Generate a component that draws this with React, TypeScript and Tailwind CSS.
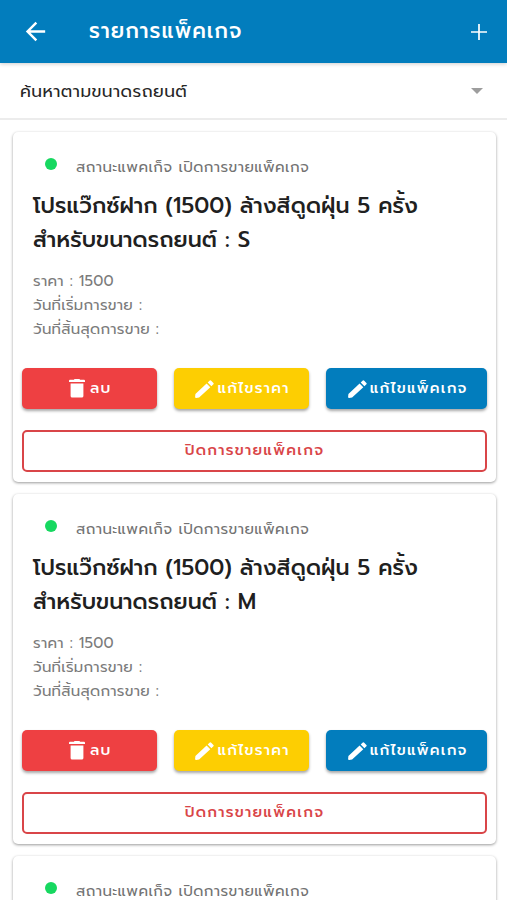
import { MdArrowBack } from "react-icons/md";

interface Package {
	id: number;
	name: string;
	size: string;
	price: number;
}

const packages: Package[] = [
	{ id: 1, name: "โปรแว๊กซ์ฝาก (1500) ล้างสีดูดฝุ่น 5 ครั้ง", size: "S", price: 1500 },
	{ id: 2, name: "โปรแว๊กซ์ฝาก (1500) ล้างสีดูดฝุ่น 5 ครั้ง", size: "M", price: 1500 },
];

const buttonClass =
	"flex h-[41px] items-center justify-center rounded-[5px] pl-[2px] text-[15px] leading-[20px] font-medium tracking-[1.2px] text-white whitespace-nowrap shadow-[0_2px_3px_rgba(0,0,0,0.35)]";

function TrashIcon() {
	return (
		<svg viewBox="0 0 16 19" className="mr-[5px] h-[19px] w-[16px] shrink-0" fill="currentColor">
			<path d="M5 0.8Q5 0 5.8 0h4.4Q11 0 11 0.8h4Q16 0.8 16 2v0.9H0V2Q0 0.8 1 0.8zM1.6 4.5h12.8v12.4q0 1.6-1.6 1.6H3.2q-1.6 0-1.6-1.6z" />
		</svg>
	);
}

function PencilIcon() {
	return (
		<svg viewBox="0 0 19 18" className="mr-[3px] h-[18px] w-[19px] shrink-0" fill="currentColor">
			<path d="M0.4 14.1 11.6 3.5l3.7 3.8L4.1 17.5l-2.9 0.4Q0.1 18 0.1 17zM12.7 2.5 14.8 0.6q0.7-0.6 1.4 0.1l2.2 2.2q0.7 0.8 0 1.4l-2 2z" />
		</svg>
	);
}

function PackageStatus() {
	return (
		<div className="flex items-start pl-[23px] pt-[26px]">
			<span className="size-3 shrink-0 rounded-full bg-[#17d860]" />
			<p className="ml-[19px] text-[15px] leading-[18px] tracking-[0.4px] whitespace-nowrap text-[#737373]">
				สถานะแพคเก็จ เปิดการขายแพ็คเกจ
			</p>
		</div>
	);
}

function PackageCard({ item }: { item: Package }) {
	return (
		<article className="h-[350px] shrink-0 rounded-[5px] bg-white px-[9px] shadow-[0_1px_3px_rgba(0,0,0,0.4)]">
			<PackageStatus />
			<h2 className="mt-[13px] pl-[11px] text-[22px] leading-[34px] font-medium tracking-[0.06px] whitespace-nowrap text-[#202020]">
				{item.name}
				<br />
				สำหรับขนาดรถยนต์ : {item.size}
			</h2>
			<div className="mt-[12px] h-[99px] pl-[11px] text-[15px] leading-[24px] tracking-[0.25px] text-[#7b7b7b]">
				<p>ราคา : {item.price}</p>
				<p>วันที่เริ่มการขาย :</p>
				<p>วันที่สิ้นสุดการขาย :</p>
			</div>
			<div className="flex gap-[17px]">
				<button className={`${buttonClass} w-[135px] bg-[#ee4042]`}>
					<TrashIcon />
					<span className="pb-[2px]">ลบ</span>
				</button>
				<button className={`${buttonClass} w-[136px] bg-[#fdce02]`}>
					<PencilIcon />
					<span className="pb-[2px]">แก้ไขราคา</span>
				</button>
				<button className={`${buttonClass} w-[161px] bg-[#027dbd]`}>
					<PencilIcon />
					<span className="pb-[2px]">แก้ไขแพ็คเกจ</span>
				</button>
			</div>
			<button className="mt-[21px] flex h-[42px] w-[465px] items-center justify-center rounded-[5px] border-2 border-[#d94548] text-[15px] font-medium tracking-[1.25px] text-[#d94548]">
				<span className="pb-px">ปิดการขายแพ็คเกจ</span>
			</button>
		</article>
	);
}

export default function App() {
	return (
		<main className="flex h-[900px] w-[507px] flex-col overflow-hidden bg-white font-['Prompt','Noto_Sans_Thai','Noto_Sans',sans-serif]">
			<header className="z-10 flex h-[63px] shrink-0 items-center bg-[#027dbd] pr-[20px] pl-[21px] text-white shadow-[0_1px_4px_rgba(0,0,0,0.2)]">
				<MdArrowBack className="size-[29px]" />
				<h1 className="ml-[39px] pt-px text-[21px] font-medium tracking-[1px] whitespace-nowrap">รายการแพ็คเกจ</h1>
				<svg viewBox="0 0 16 16" className="ml-auto size-4" stroke="currentColor" strokeWidth="1.7">
					<path d="M8 0v16M0 8h16" />
				</svg>
			</header>
			<div className="flex h-[57px] shrink-0 items-center border-b-2 border-[#ececec] pr-[24px] pl-[20px]">
				<span className="pt-[2px] text-[17px] tracking-[0.45px] whitespace-nowrap text-[#262626]">ค้นหาตามขนาดรถยนต์</span>
				<svg viewBox="0 0 12 6" className="ml-auto h-[6px] w-[12px]" fill="#9d9d9d">
					<path d="M0 0h12L6 6z" />
				</svg>
			</div>
			<section className="flex flex-col gap-3 pt-3 pr-[11px] pl-[13px]">
				{packages.map((item) => (
					<PackageCard key={item.id} item={item} />
				))}
				<article className="h-[60px] shrink-0 rounded-t-[5px] bg-white px-[9px] shadow-[0_1px_3px_rgba(0,0,0,0.4)]">
					<PackageStatus />
				</article>
			</section>
		</main>
	);
}
